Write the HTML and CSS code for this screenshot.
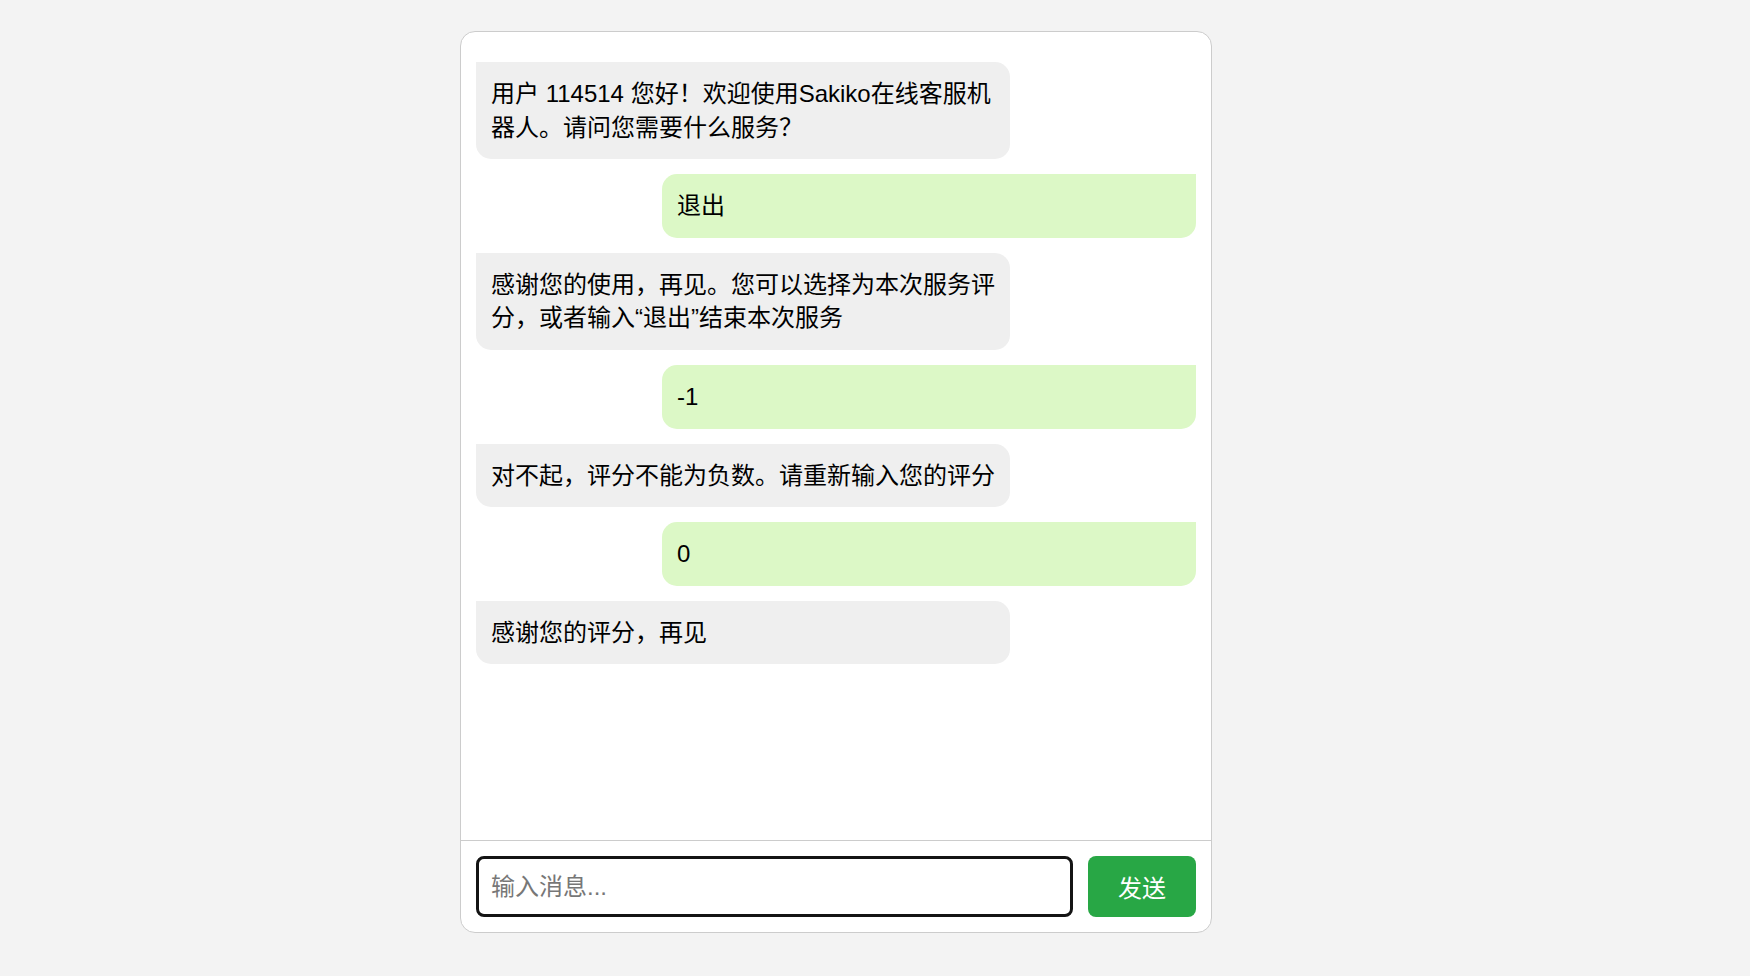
FILE: index.html
```html
<!DOCTYPE html>
<html lang="zh-CN">
<head>
<meta charset="utf-8">
<title>Sakiko 在线客服</title>
<link rel="stylesheet" href="styles.css">
</head>
<body>
<div class="chat">
  <div class="messages">
    <div class="msg bot">用户 114514 您好！欢迎使用Sakiko在线客服机器人。请问您需要什么服务？</div>
    <div class="msg user">退出</div>
    <div class="msg bot">感谢您的使用，再见。您可以选择为本次服务评分，或者输入“退出”结束本次服务</div>
    <div class="msg user">-1</div>
    <div class="msg bot">对不起，评分不能为负数。请重新输入您的评分</div>
    <div class="msg user">0</div>
    <div class="msg bot">感谢您的评分，再见</div>
  </div>
  <div class="composer">
    <input class="input" type="text" placeholder="输入消息...">
    <button class="send" type="button">发送</button>
  </div>
</div>
</body>
</html>
```
FILE: styles.css
```css
html, body {
  margin: 0;
  padding: 0;
}
body {
  background: #f3f3f3;
  font-family: "Liberation Sans", "Noto Sans CJK SC", sans-serif;
  color: #000;
  padding: 31px 0 0 460px;
  height: 976px;
  box-sizing: border-box;
}
.chat {
  width: 750px;
  height: 900px;
  background: #fff;
  border: 1px solid #cccccc;
  border-radius: 15px;
  display: flex;
  flex-direction: column;
  overflow: hidden;
}
.messages {
  flex: 1;
  padding: 30px 15px 15px;
  display: flex;
  flex-direction: column;
  gap: 15px;
  overflow: hidden;
}
.msg {
  width: 70%;
  padding: 15px;
  font-size: 24px;
  line-height: 1.4;
  box-sizing: content-box;
}
.msg.bot {
  align-self: flex-start;
  background: #efefef;
  border-radius: 0 15px 15px 15px;
}
.msg.user {
  align-self: flex-end;
  background: #dcf8c6;
  border-radius: 15px 0 15px 15px;
}
.composer {
  border-top: 1px solid #cccccc;
  padding: 15px;
  display: flex;
  gap: 15px;
}
.input {
  flex: 1;
  height: 61px;
  box-sizing: border-box;
  border: 3px solid #141414;
  border-radius: 8px;
  padding: 0 12px;
  font-family: "Liberation Sans", "Noto Sans CJK SC", sans-serif;
  font-size: 24px;
  color: #000;
  outline: none;
}
.input::placeholder {
  color: #777;
}
.send {
  width: 108px;
  height: 61px;
  border: none;
  border-radius: 8px;
  background: #28a745;
  color: #fff;
  font-family: "Liberation Sans", "Noto Sans CJK SC", sans-serif;
  font-size: 24px;
  padding: 0;
}
```
